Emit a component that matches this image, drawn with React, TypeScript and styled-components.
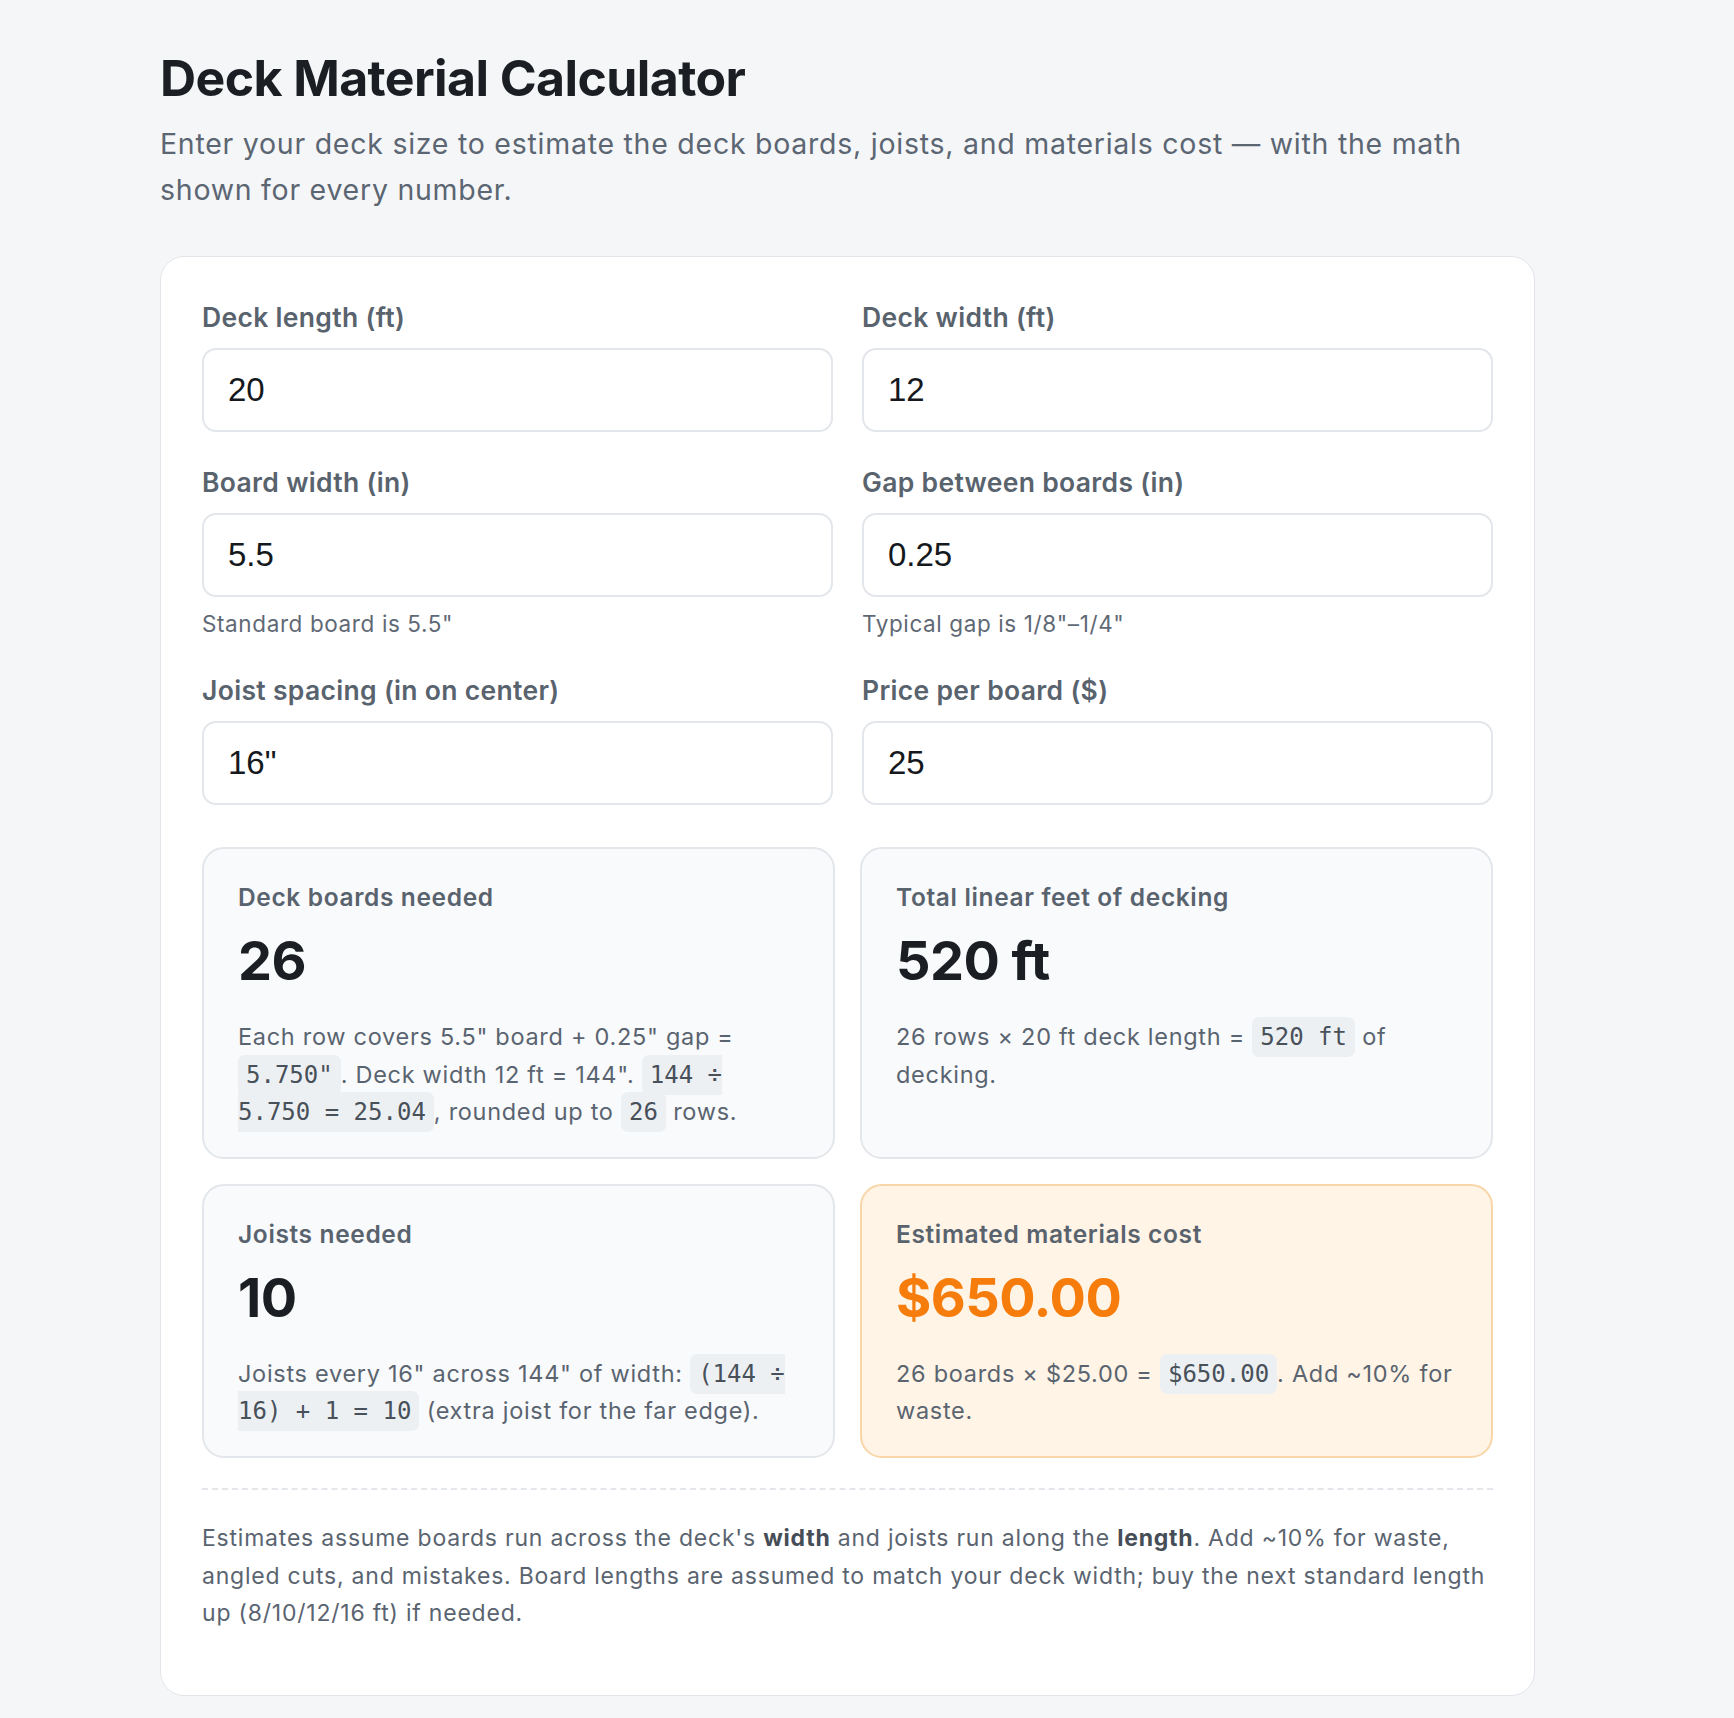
import React, { useState } from "react";
import styled, { createGlobalStyle } from "styled-components";

const GlobalStyle = createGlobalStyle`
  html, body {
    margin: 0;
    padding: 0;
    background: #f5f6f8;
  }
  body {
    font-family: Inter, "Noto Sans", sans-serif;
    -webkit-font-smoothing: antialiased;
  }
  *, *::before, *::after { box-sizing: border-box; }
`;

const Page = styled.main`
  padding: 48px 0 25px 160px;
`;

const Container = styled.div`
  width: 1375px;
`;

const Title = styled.h1`
  margin: 0;
  font-size: 50px;
  line-height: 60px;
  font-weight: 700;
  color: #1b1e22;
  letter-spacing: -0.012em;
`;

const Subtitle = styled.p`
  margin: 13px 0 0;
  font-size: 28.5px;
  line-height: 46px;
  letter-spacing: 0.026em;
  color: #5c6673;
`;

const Card = styled.section`
  margin-top: 43px;
  background: #ffffff;
  border: 1px solid #e2e5e9;
  border-radius: 24px;
  padding: 42px 41px 41px;
`;

const FieldGrid = styled.div`
  display: grid;
  grid-template-columns: 1fr 1fr;
  column-gap: 29px;
  row-gap: 32px;
`;

const Field = styled.div`
  display: flex;
  flex-direction: column;
`;

const Label = styled.label`
  display: block;
  font-size: 26.5px;
  line-height: 36px;
  font-weight: 600;
  letter-spacing: 0.012em;
  color: #59636e;
  margin-bottom: 13px;
`;

const Input = styled.input`
  width: 100%;
  height: 84px;
  border: 2px solid #e3e6ea;
  border-radius: 14px;
  padding: 0 24px;
  font-family: "Liberation Sans", Arial, sans-serif;
  font-size: 33px;
  color: #15181c;
  background: #ffffff;
  outline: none;
  &:focus {
    border-color: #c9ced6;
  }
`;

const Hint = styled.div`
  margin-top: 10px;
  font-size: 22.5px;
  line-height: 33px;
  letter-spacing: 0.027em;
  color: #5f6975;
`;

const ResultsGrid = styled.div`
  margin-top: 42px;
  display: grid;
  grid-template-columns: 1fr 1fr;
  gap: 25px;
`;

const ResultCard = styled.div<{ $accent?: boolean }>`
  border: 2px solid ${(p) => (p.$accent ? "#f8d6a8" : "#e3e6ea")};
  background: ${(p) => (p.$accent ? "#fff4e6" : "#f9fafc")};
  border-radius: 22px;
  padding: 31px 34px 26px;
`;

const ResultLabel = styled.div`
  font-size: 24.5px;
  line-height: 34px;
  font-weight: 600;
  letter-spacing: 0.026em;
  color: #59636e;
`;

const ResultValue = styled.div<{ $accent?: boolean }>`
  margin-top: 18px;
  font-size: 54px;
  line-height: 58px;
  font-weight: 700;
  letter-spacing: -0.01em;
  color: ${(p) => (p.$accent ? "#f67c0c" : "#1b1e22")};
`;

const Explain = styled.p`
  margin: 28px 0 0;
  font-size: 23.5px;
  line-height: 37.6px;
  letter-spacing: 0.03em;
  color: #5a6470;
`;

const Code = styled.code`
  font-family: "DejaVu Sans Mono", "Liberation Mono", monospace;
  font-size: 24px;
  line-height: 1;
  letter-spacing: 0;
  color: #48505a;
  background: #edf0f3;
  border-radius: 7px;
  padding: 6px 8px;
`;

const Note = styled.p`
  margin: 30px 0 21px;
  border-top: 2px dashed #e3e6ea;
  padding-top: 30px;
  font-size: 23px;
  line-height: 37.6px;
  letter-spacing: 0.034em;
  color: #5a6470;
  strong {
    font-weight: 700;
    color: #454d57;
  }
`;

const num = (s: string) => {
  const n = parseFloat(s);
  return Number.isFinite(n) ? n : 0;
};

export default function App() {
  const [length, setLength] = useState("20");
  const [width, setWidth] = useState("12");
  const [board, setBoard] = useState("5.5");
  const [gap, setGap] = useState("0.25");
  const [spacing, setSpacing] = useState('16"');
  const [price, setPrice] = useState("25");

  const L = num(length);
  const W = num(width);
  const B = num(board);
  const G = num(gap);
  const S = num(spacing);
  const P = num(price);

  const cover = B + G;
  const widthIn = W * 12;
  const rawRows = cover > 0 ? widthIn / cover : 0;
  const rows = Math.ceil(rawRows);
  const linear = rows * L;
  const joists = S > 0 ? Math.ceil(widthIn / S) + 1 : 0;
  const cost = rows * P;
  const money = (v: number) => "$" + v.toFixed(2);

  return (
    <>
      <GlobalStyle />
      <Page>
        <Container>
          <Title>Deck Material Calculator</Title>
          <Subtitle>
            Enter your deck size to estimate the deck boards, joists, and materials cost — with the math shown for
            every number.
          </Subtitle>
          <Card>
            <FieldGrid>
              <Field>
                <Label htmlFor="len">Deck length (ft)</Label>
                <Input id="len" value={length} onChange={(e) => setLength(e.target.value)} />
              </Field>
              <Field>
                <Label htmlFor="wid">Deck width (ft)</Label>
                <Input id="wid" value={width} onChange={(e) => setWidth(e.target.value)} />
              </Field>
              <Field>
                <Label htmlFor="board">Board width (in)</Label>
                <Input id="board" value={board} onChange={(e) => setBoard(e.target.value)} />
                <Hint>Standard board is 5.5"</Hint>
              </Field>
              <Field>
                <Label htmlFor="gap">Gap between boards (in)</Label>
                <Input id="gap" value={gap} onChange={(e) => setGap(e.target.value)} />
                <Hint>Typical gap is 1/8"–1/4"</Hint>
              </Field>
              <Field>
                <Label htmlFor="sp">Joist spacing (in on center)</Label>
                <Input id="sp" value={spacing} onChange={(e) => setSpacing(e.target.value)} />
              </Field>
              <Field>
                <Label htmlFor="price">Price per board ($)</Label>
                <Input id="price" value={price} onChange={(e) => setPrice(e.target.value)} />
              </Field>
            </FieldGrid>

            <ResultsGrid>
              <ResultCard>
                <ResultLabel>Deck boards needed</ResultLabel>
                <ResultValue>{rows}</ResultValue>
                <Explain>
                  Each row covers {B}" board + {G}" gap = <Code>{cover.toFixed(3)}"</Code>. Deck width {W} ft ={" "}
                  {widthIn}". <Code>{`${widthIn} ÷ ${cover.toFixed(3)} = ${rawRows.toFixed(2)}`}</Code>, rounded up
                  to <Code>{rows}</Code> rows.
                </Explain>
              </ResultCard>
              <ResultCard>
                <ResultLabel>Total linear feet of decking</ResultLabel>
                <ResultValue>{linear} ft</ResultValue>
                <Explain>
                  {rows} rows × {L} ft deck length = <Code>{linear} ft</Code> of decking.
                </Explain>
              </ResultCard>
              <ResultCard>
                <ResultLabel>Joists needed</ResultLabel>
                <ResultValue>{joists}</ResultValue>
                <Explain>
                  Joists every {S}" across {widthIn}" of width:{" "}
                  <Code>{`(${widthIn} ÷ ${S}) + 1 = ${joists}`}</Code> (extra joist for the far edge).
                </Explain>
              </ResultCard>
              <ResultCard $accent>
                <ResultLabel>Estimated materials cost</ResultLabel>
                <ResultValue $accent>{money(cost)}</ResultValue>
                <Explain>
                  {rows} boards × {money(P)} = <Code>{money(cost)}</Code>. Add ~10% for waste.
                </Explain>
              </ResultCard>
            </ResultsGrid>

            <Note>
              Estimates assume boards run across the deck's <strong>width</strong> and joists run along the{" "}
              <strong>length</strong>. Add ~10% for waste, angled cuts, and mistakes. Board lengths are assumed to
              match your deck width; buy the next standard length up (8/10/12/16 ft) if needed.
            </Note>
          </Card>
        </Container>
      </Page>
    </>
  );
}
